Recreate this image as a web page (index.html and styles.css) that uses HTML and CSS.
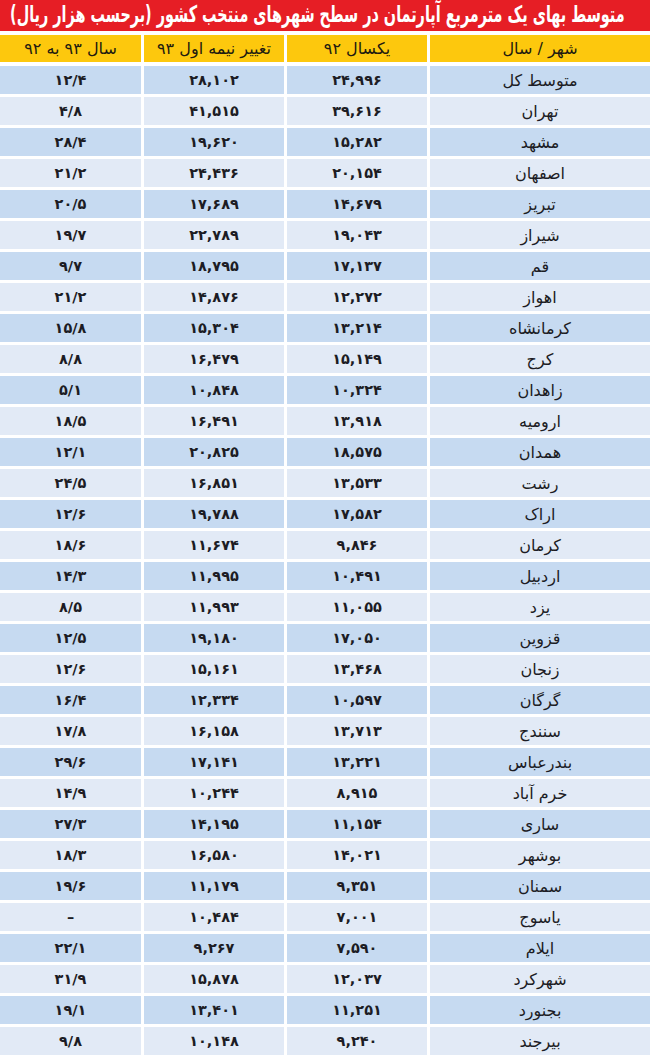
FILE: index.html
```html
<!DOCTYPE html>
<html lang="fa" dir="rtl">
<head>
<meta charset="utf-8">
<title>متوسط بهای یک مترمربع آپارتمان</title>
<link rel="stylesheet" href="styles.css">
</head>
<body>
<div class="page">
  <h1 class="title"><span class="title-text">متوسط بهای یک مترمربع آپارتمان در سطح شهرهای منتخب کشور (برحسب هزار ریال)</span></h1>
  <div class="table">
    <div class="row head"><div>شهر / سال</div><div>یکسال ۹۲</div><div>تغییر نیمه اول ۹۳</div><div>سال ۹۳ به ۹۲</div></div>
    <div class="row dark"><div class="city">متوسط کل</div><div class="num">۲۴,۹۹۶</div><div class="num">۲۸,۱۰۲</div><div class="num">۱۲/۴</div></div>
    <div class="row light"><div class="city">تهران</div><div class="num">۳۹,۶۱۶</div><div class="num">۴۱,۵۱۵</div><div class="num">۴/۸</div></div>
    <div class="row dark"><div class="city">مشهد</div><div class="num">۱۵,۲۸۲</div><div class="num">۱۹,۶۲۰</div><div class="num">۲۸/۴</div></div>
    <div class="row light"><div class="city">اصفهان</div><div class="num">۲۰,۱۵۴</div><div class="num">۲۴,۴۳۶</div><div class="num">۲۱/۲</div></div>
    <div class="row dark"><div class="city">تبریز</div><div class="num">۱۴,۶۷۹</div><div class="num">۱۷,۶۸۹</div><div class="num">۲۰/۵</div></div>
    <div class="row light"><div class="city">شیراز</div><div class="num">۱۹,۰۴۳</div><div class="num">۲۲,۷۸۹</div><div class="num">۱۹/۷</div></div>
    <div class="row dark"><div class="city">قم</div><div class="num">۱۷,۱۳۷</div><div class="num">۱۸,۷۹۵</div><div class="num">۹/۷</div></div>
    <div class="row light"><div class="city">اهواز</div><div class="num">۱۲,۲۷۲</div><div class="num">۱۴,۸۷۶</div><div class="num">۲۱/۲</div></div>
    <div class="row dark"><div class="city">کرمانشاه</div><div class="num">۱۳,۲۱۴</div><div class="num">۱۵,۳۰۴</div><div class="num">۱۵/۸</div></div>
    <div class="row light"><div class="city">کرج</div><div class="num">۱۵,۱۴۹</div><div class="num">۱۶,۴۷۹</div><div class="num">۸/۸</div></div>
    <div class="row dark"><div class="city">زاهدان</div><div class="num">۱۰,۳۲۴</div><div class="num">۱۰,۸۴۸</div><div class="num">۵/۱</div></div>
    <div class="row light"><div class="city">ارومیه</div><div class="num">۱۳,۹۱۸</div><div class="num">۱۶,۴۹۱</div><div class="num">۱۸/۵</div></div>
    <div class="row dark"><div class="city">همدان</div><div class="num">۱۸,۵۷۵</div><div class="num">۲۰,۸۲۵</div><div class="num">۱۲/۱</div></div>
    <div class="row light"><div class="city">رشت</div><div class="num">۱۳,۵۳۳</div><div class="num">۱۶,۸۵۱</div><div class="num">۲۴/۵</div></div>
    <div class="row dark"><div class="city">اراک</div><div class="num">۱۷,۵۸۲</div><div class="num">۱۹,۷۸۸</div><div class="num">۱۲/۶</div></div>
    <div class="row light"><div class="city">کرمان</div><div class="num">۹,۸۴۶</div><div class="num">۱۱,۶۷۴</div><div class="num">۱۸/۶</div></div>
    <div class="row dark"><div class="city">اردبیل</div><div class="num">۱۰,۴۹۱</div><div class="num">۱۱,۹۹۵</div><div class="num">۱۴/۳</div></div>
    <div class="row light"><div class="city">یزد</div><div class="num">۱۱,۰۵۵</div><div class="num">۱۱,۹۹۳</div><div class="num">۸/۵</div></div>
    <div class="row dark"><div class="city">قزوین</div><div class="num">۱۷,۰۵۰</div><div class="num">۱۹,۱۸۰</div><div class="num">۱۲/۵</div></div>
    <div class="row light"><div class="city">زنجان</div><div class="num">۱۳,۴۶۸</div><div class="num">۱۵,۱۶۱</div><div class="num">۱۲/۶</div></div>
    <div class="row dark"><div class="city">گرگان</div><div class="num">۱۰,۵۹۷</div><div class="num">۱۲,۳۳۴</div><div class="num">۱۶/۴</div></div>
    <div class="row light"><div class="city">سنندج</div><div class="num">۱۳,۷۱۳</div><div class="num">۱۶,۱۵۸</div><div class="num">۱۷/۸</div></div>
    <div class="row dark"><div class="city">بندرعباس</div><div class="num">۱۳,۲۲۱</div><div class="num">۱۷,۱۴۱</div><div class="num">۲۹/۶</div></div>
    <div class="row light"><div class="city">خرم آباد</div><div class="num">۸,۹۱۵</div><div class="num">۱۰,۲۴۴</div><div class="num">۱۴/۹</div></div>
    <div class="row dark"><div class="city">ساری</div><div class="num">۱۱,۱۵۴</div><div class="num">۱۴,۱۹۵</div><div class="num">۲۷/۳</div></div>
    <div class="row light"><div class="city">بوشهر</div><div class="num">۱۴,۰۲۱</div><div class="num">۱۶,۵۸۰</div><div class="num">۱۸/۳</div></div>
    <div class="row dark"><div class="city">سمنان</div><div class="num">۹,۳۵۱</div><div class="num">۱۱,۱۷۹</div><div class="num">۱۹/۶</div></div>
    <div class="row light"><div class="city">یاسوج</div><div class="num">۷,۰۰۱</div><div class="num">۱۰,۴۸۴</div><div class="num">–</div></div>
    <div class="row dark"><div class="city">ایلام</div><div class="num">۷,۵۹۰</div><div class="num">۹,۲۶۷</div><div class="num">۲۲/۱</div></div>
    <div class="row light"><div class="city">شهرکرد</div><div class="num">۱۲,۰۳۷</div><div class="num">۱۵,۸۷۸</div><div class="num">۳۱/۹</div></div>
    <div class="row dark"><div class="city">بجنورد</div><div class="num">۱۱,۲۵۱</div><div class="num">۱۳,۴۰۱</div><div class="num">۱۹/۱</div></div>
    <div class="row light"><div class="city">بیرجند</div><div class="num">۹,۲۴۰</div><div class="num">۱۰,۱۴۸</div><div class="num">۹/۸</div></div>
  </div>
</div>
</body>
</html>
```

FILE: styles.css
```css
html, body {
  margin: 0;
  padding: 0;
  background: #ffffff;
}

body {
  font-family: "DejaVu Sans", "Noto Sans", sans-serif;
  color: #1c1c24;
}

.page {
  width: 650px;
  direction: rtl;
}

.title {
  margin: 0 0 4px 0;
  height: 31px;
  background: #e61e25;
  color: #ffffff;
  font-size: 23px;
  font-weight: bold;
  line-height: 29px;
  padding: 0 25px 0 0;
  white-space: nowrap;
  overflow: hidden;
}

.title-text {
  display: inline-block;
  transform: scaleX(0.626);
  transform-origin: right center;
}

.table {
  display: flex;
  flex-direction: column;
  gap: 3px;
}

.row {
  display: grid;
  grid-template-columns: 220px 140px 140px 141px;
  column-gap: 3px;
  height: 28px;
}

.row > div {
  display: flex;
  align-items: center;
  justify-content: center;
  font-size: 15px;
  white-space: nowrap;
}

.head {
  height: 27px;
  margin-bottom: 1px;
}

.head > div {
  background: #fdc80d;
  font-size: 16px;
  color: #201a10;
}

.dark > div {
  background: #c6daf1;
}

.light > div {
  background: #e2eaf6;
}

.num {
  font-weight: bold;
}

.row > .num {
  font-size: 14.5px;
}

.row > .city {
  font-size: 16px;
}
```
